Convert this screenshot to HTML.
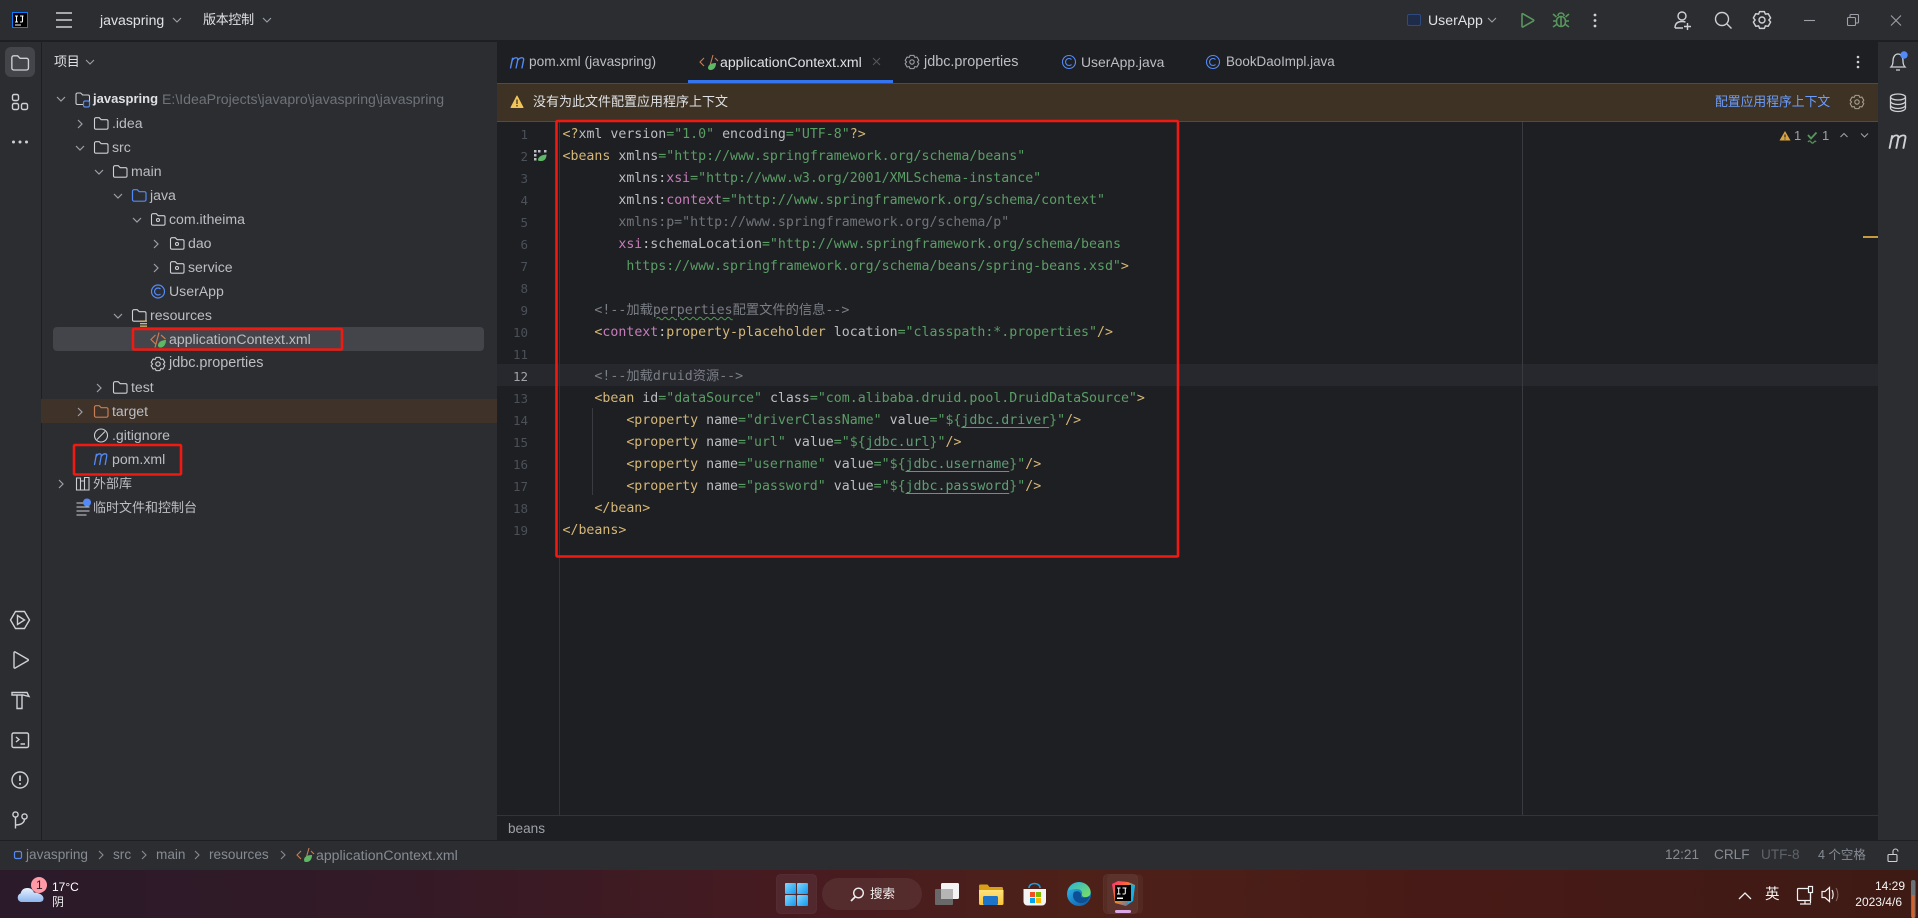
<!DOCTYPE html>
<html lang="zh"><head><meta charset="utf-8"><title>javaspring</title>
<style>
html,body{margin:0;padding:0;background:#1e1f22}
#r{position:relative;width:1918px;height:918px;overflow:hidden;font-family:"Liberation Sans","Noto Sans CJK SC",sans-serif;font-size:14.1px;color:#bcbec4}
#r>svg{position:absolute;left:0;top:0}
.t{position:absolute;line-height:20px;white-space:pre;height:20px}
.c{font-size:13px;letter-spacing:-.3px}
.b{position:absolute}
.l{position:absolute;left:562.5px;height:22px;margin-top:2px;font:13.25px/22px "DejaVu Sans Mono","Noto Sans CJK SC",monospace;white-space:pre;color:#bcbec4}
.n{position:absolute;width:40px;left:488px;margin-top:1.5px;text-align:right;font:12.5px/22px "DejaVu Sans Mono",monospace;color:#4b5059}
.y{color:#d5b778}.g{color:#5a9e66}.p{color:#c77dbb}.d{color:#7a7e85}.u{color:#6f737a}
.k{text-decoration:underline;text-decoration-color:#6f8f78;text-underline-offset:3px;color:#5f9e76}
.w{text-decoration:underline wavy #4f9a55 1px;text-underline-offset:2px}
.s{color:#878b93;font-size:13.6px}
</style></head><body><div id="r">
<svg width="1918" height="918" viewBox="0 0 1918 918" xmlns="http://www.w3.org/2000/svg" fill="none">
<defs>
<linearGradient id="tb" x1="0" x2="1" y1="0" y2="0"><stop offset="0" stop-color="#2a1a2a"/><stop offset=".2" stop-color="#331a26"/><stop offset=".42" stop-color="#471b20"/><stop offset=".56" stop-color="#4d2118"/><stop offset=".75" stop-color="#481a17"/><stop offset="1" stop-color="#3e1a14"/></linearGradient>
<linearGradient id="win" x1="0" x2="1" y1="0" y2="1"><stop offset="0" stop-color="#86d7fd"/><stop offset="1" stop-color="#0f97ef"/></linearGradient>
<linearGradient id="fol" x1="0" x2="0" y1="0" y2="1"><stop offset="0" stop-color="#ffe27a"/><stop offset="1" stop-color="#f8c43c"/></linearGradient>
<linearGradient id="edg" x1="0" x2="1" y1="0" y2="1"><stop offset="0" stop-color="#35c1f1"/><stop offset=".55" stop-color="#1b7fc4"/><stop offset="1" stop-color="#0c59a4"/></linearGradient>
<linearGradient id="edg2" x1="0" x2="1" y1="0" y2="1"><stop offset="0" stop-color="#2bb5d8"/><stop offset="1" stop-color="#7ee05a"/></linearGradient>
<linearGradient id="ij" x1="0" x2="1" y1="0" y2="1"><stop offset="0" stop-color="#ff2d7a"/><stop offset=".5" stop-color="#fc801d"/><stop offset="1" stop-color="#087cfa"/></linearGradient>
<linearGradient id="cl" x1="0" x2="0" y1="0" y2="1"><stop offset="0" stop-color="#e8f1ff"/><stop offset="1" stop-color="#8db6ee"/></linearGradient>
<path id="fo" d="M1.5 3A1.5 1.5 0 0 1 3 1.5h3.2l2 2h5.3A1.5 1.5 0 0 1 15 5v6.5a1.5 1.5 0 0 1-1.5 1.5H3A1.5 1.5 0 0 1 1.5 11.500z"/>
<path id="cd" d="M0 0l4 4 4-4"/>
<path id="cr" d="M0 0l4 4-4 4"/>
<path id="ge" stroke-linejoin="round" d="M-2-7H2L2.800-4.900 5.200-5.200 7.200-1.700 5.700 0 7.200 1.700 5.200 5.200 2.800 4.900 2 7H-2L-2.800 4.900-5.200 5.200-7.200 1.700-5.700 0-7.200-1.700-5.200-5.200-2.800-4.900Z"/>
<path id="mm" stroke-linecap="round" d="M.5 11 2.400.8M2 3.200C3 1.300 4.500.3 5.700.3 7 .3 7.500 1.200 7.200 2.800L5.700 11M7.400 2.600C8.400 1.100 9.900.3 11.200.3 12.500.3 13 1.200 12.700 2.800L11.200 11"/>
</defs>
<!-- base panels -->
<rect width="1918" height="918" fill="#1e1f22"/>
<rect width="1918" height="40" fill="#2b2d30"/>
<rect y="40" width="1918" height="2" fill="#1e1f22"/>
<rect y="42" width="41" height="798" fill="#2b2d30"/>
<rect x="41" y="42" width="1" height="798" fill="#1e1f22"/>
<rect x="42" y="42" width="455" height="798" fill="#2b2d30"/>
<rect x="1878" y="42" width="40" height="798" fill="#2b2d30"/>
<rect y="840" width="1918" height="30" fill="#2b2d30"/>
<rect y="840" width="1918" height="1" fill="#1e1f22"/>
<rect y="870" width="1918" height="48" fill="url(#tb)"/>
<!-- tree rows -->
<rect x="53" y="327" width="431" height="24" rx="4" fill="#43454a"/>
<rect x="41" y="399" width="456" height="24" fill="#3e3229"/>
<!-- tab underline -->
<rect x="688" y="80" width="205" height="3" fill="#3574f0"/>
<!-- banner -->
<rect x="497" y="83" width="1381" height="38" fill="#3d3223"/>
<rect x="497" y="83" width="1381" height="1" fill="#5a4a30"/>
<rect x="497" y="121" width="1381" height="1" fill="#5a4a30"/>
<!-- editor -->
<rect x="497" y="364" width="1381" height="22" fill="#26282e"/>
<rect x="559" y="122" width="1" height="693" fill="#313438"/>
<rect x="1522" y="122" width="1" height="693" fill="#393b40"/>
<rect x="592" y="408" width="1" height="87" fill="#393b40"/>
<rect x="497" y="815" width="1381" height="1" fill="#313438"/>
<rect x="1863" y="236" width="15" height="2" fill="#c79a3e"/>
<!-- title bar icons -->
<rect x="12.500" y="12.500" width="15" height="15" fill="#000" stroke="#087cfa"/>
<path d="M15 16h3M16.500 16v6M15 22h3M20 16h3.500M22.500 16v5q0 1-1 1H20M15 25h6" stroke="#fff" stroke-width="1.100"/>
<path d="M56 13h16M56 20h16M56 27h16" stroke="#ced0d6" stroke-width="1.400"/>
<g stroke="#9da0a8" stroke-width="1.100"><use href="#cd" x="173" y="18"/><use href="#cd" x="263" y="18"/><use href="#cd" x="1488" y="18"/></g>
<rect x="1407.500" y="14.500" width="13" height="11" rx="1.500" fill="#1e2c4a" stroke="#2f4a80"/>
<path d="M1522 14.500v12.500a.6.6 0 0 0 1 .4l10.500-6a.6.6 0 0 0 0-1l-10.500-6a.6.6 0 0 0-1 .1z" stroke="#57965c" stroke-width="1.600" transform="translate(0 -.5)"/>
<g stroke="#57965c" stroke-width="1.600"><rect x="1556.500" y="16.500" width="9" height="10" rx="4.500"/><path d="M1558 16c0-4 6-4 6 0M1553 14l3.500 3M1569 14l-3.500 3M1553 21h3.500M1565.500 21h3.500M1553 27l3.500-2.500M1569 27l-3.500-2.500M1561 17v9"/></g>
<g fill="#ced0d6"><circle cx="1595" cy="15" r="1.400"/><circle cx="1595" cy="20.500" r="1.400"/><circle cx="1595" cy="26" r="1.400"/></g>
<g stroke="#ced0d6" stroke-width="1.400"><circle cx="1682" cy="16" r="4"/><path d="M1675 28c0-5 3-6.500 7-6.500 1.500 0 2.500.2 3.500.6M1675 28h8M1684 26.500h7M1687.500 23v7"/>
<circle cx="1722" cy="19" r="6.500"/><path d="M1727 24l4.500 4.500"/>
<use href="#ge" transform="translate(1762 20) scale(1.200)" stroke-width="1.200"/><circle cx="1762" cy="20" r="3"/></g>
<g stroke="#9da0a8" stroke-width="1.100"><path d="M1804 20.500h11"/><rect x="1847.500" y="17.500" width="8" height="8" rx="1"/><path d="M1850 17v-1.500a1 1 0 0 1 1-1h6.500a1 1 0 0 1 1 1v6.500a1 1 0 0 1-1 1H1856"/><path d="M1891 15.500l10 10M1901 15.500l-10 10"/></g>
<!-- left stripe -->
<rect x="5" y="47" width="30" height="30" rx="6" fill="#43454a"/>
<g stroke="#ced0d6" stroke-width="1.400">
<use href="#fo" transform="translate(10 54) scale(1.230)" stroke-width="1.100"/>
<rect x="12.500" y="94.500" width="6" height="6" rx="1.500"/><rect x="12.500" y="103.500" width="6" height="6" rx="1.500"/><rect x="21.500" y="103.500" width="6" height="6" rx="1.500"/>
</g>
<g fill="#ced0d6"><circle cx="13.500" cy="142" r="1.500"/><circle cx="20" cy="142" r="1.500"/><circle cx="26.500" cy="142" r="1.500"/></g>
<g stroke="#ced0d6" stroke-width="1.400">
<path d="M15.500 611.500h9l5 8.500-5 8.500h-9l-5-8.500z"/><path d="M17.500 615.500v9l7-4.500z"/>
<path d="M14 652.500v15a.7.7 0 0 0 1 .6l13-7.500a.7.7 0 0 0 0-1.200l-13-7.500a.7.7 0 0 0-1 .6z"/>
<path d="M12 692.500h15l2 4-6-1.500H12zM17 695.500v13h5v-13"/>
<rect x="12" y="733" width="16.500" height="14.500" rx="1.500"/><path d="M16 737l3 2.500-3 2.500M20.500 744h4.500"/>
<circle cx="20" cy="780" r="8"/><path d="M20 775.500v5.500M20 783v1.800" stroke-width="1.700"/>
<circle cx="15.500" cy="814.500" r="2.600"/><circle cx="24.500" cy="816.500" r="2.600"/><path d="M15.500 817.500v11M15.500 825c5 0 9-2 9-6"/>
</g>
<!-- tree chevrons -->
<g stroke="#9da0a8" stroke-width="1.200">
<use href="#cd" x="57" y="97"/><use href="#cr" x="78" y="120"/><use href="#cd" x="76" y="146"/><use href="#cd" x="95" y="170"/><use href="#cd" x="114" y="194"/><use href="#cd" x="133" y="218"/><use href="#cr" x="154" y="240"/><use href="#cr" x="154" y="264"/><use href="#cd" x="114" y="314"/><use href="#cr" x="97" y="384"/><use href="#cr" x="78" y="408"/><use href="#cr" x="59" y="480"/>
</g>
<!-- tree icons -->
<g transform="translate(0 -.5)">
<g stroke="#ced0d6" stroke-width="1.100">
<use href="#fo" x="74.500" y="92"/>
<use href="#fo" x="93" y="116.700"/><use href="#fo" x="93" y="140.700"/><use href="#fo" x="112" y="164.700"/>
<use href="#fo" x="150" y="212.700"/><circle cx="158" cy="220.500" r="1.500"/>
<use href="#fo" x="169" y="236.700"/><circle cx="177" cy="244.500" r="1.500"/>
<use href="#fo" x="169" y="260.700"/><circle cx="177" cy="268.500" r="1.500"/>
<use href="#fo" x="131" y="308.700"/><use href="#fo" x="112" y="380.700"/>
<circle cx="158" cy="364.500" r="2.200"/><use href="#ge" transform="translate(158 364.500) scale(.95)"/>
<circle cx="101" cy="436" r="6.500"/><path d="M97 440l8-8"/>
<path d="M76.500 478.500h4v12h-4zM80.500 481.500h4v9h-4zM84.500 478h4.500v12.500h-4.500z"/>
</g>
<rect x="83.500" y="101.500" width="6" height="6" rx="1.500" fill="#2b2d30" stroke="#548af7" stroke-width="1.200"/>
<use href="#fo" x="131" y="188.700" stroke="#548af7" stroke-width="1.200"/>
<use href="#fo" x="93" y="404.700" stroke="#c77d55" stroke-width="1.200"/>
<circle cx="158" cy="292" r="6.500" stroke="#548af7" stroke-width="1.200"/><path d="M160.500 289.500a3.500 3.500 0 1 0 0 5" stroke="#548af7" stroke-width="1.200"/>
<rect x="140" y="321" width="7" height="1.300" fill="#d5b778"/><rect x="140" y="323.500" width="7" height="1.300" fill="#d5b778"/><rect x="140" y="326" width="7" height="1.300" fill="#d5b778"/>
<g stroke="#c77d55" stroke-width="1.200"><path d="M155.500 335.500l-4.500 4.500 4.500 4.500M159 333l-4 15M161 335.500l4.500 4"/></g><path d="M158 346c0-3 3-5.500 8-5.500 0 4-2 7.500-5.500 7.500-1.500 0-2.500-.8-2.500-2z" fill="#5fb865"/>
<use href="#mm" transform="translate(94 454)" stroke="#548af7" stroke-width="1.300"/>
<path d="M76.500 503.500h10M76.500 507.500h13M76.500 511.500h13M76.500 515.500h10" stroke="#ced0d6" stroke-width="1.100"/><circle cx="87" cy="503" r="4" fill="#548af7"/>
</g>
<!-- project header chevron -->
<use href="#cd" x="86" y="60" stroke="#9da0a8" stroke-width="1.100"/>
<!-- tabs icons -->
<use href="#mm" transform="translate(510 57.500) scale(1.070 .95)" stroke="#548af7" stroke-width="1.300"/>
<g stroke="#c77d55" stroke-width="1.100"><path d="M704 58l-4 4 4 4M713 55l-4 14M715 58l3 3"/></g><path d="M708 68c0-3 3-5 8-5 0 4-2 7-5.500 7-1.500 0-2.500-1-2.500-2z" fill="#5fb865"/>
<path d="M873 58l7 7M880 58l-7 7" stroke="#54575d" stroke-width="1.100"/>
<g stroke="#9da0a8" stroke-width="1.100"><circle cx="912" cy="62" r="2.200"/><use href="#ge" transform="translate(912 62) scale(.95)"/></g>
<g stroke="#548af7" stroke-width="1.100"><circle cx="1069" cy="62" r="6.500"/><path d="M1071.500 59.500a3.500 3.500 0 1 0 0 5"/><circle cx="1213" cy="62" r="6.500"/><path d="M1215.500 59.500a3.500 3.500 0 1 0 0 5"/></g>
<g fill="#ced0d6"><circle cx="1858" cy="57" r="1.300"/><circle cx="1858" cy="62" r="1.300"/><circle cx="1858" cy="67" r="1.300"/></g>
<!-- banner icons -->
<path d="M517 96l6 11.500h-12z" fill="#f2c55c" stroke="#f2c55c" stroke-linejoin="round"/><path d="M517 99.500v4.500M517 105v1.500" stroke="#3d3223" stroke-width="1.300"/>
<g stroke="#a89f92" stroke-width="1.100"><circle cx="1857" cy="102" r="2.200"/><use href="#ge" transform="translate(1857 102) scale(.95)"/></g>
<!-- gutter icon -->
<g fill="#bcbec4"><rect x="534" y="150" width="2.500" height="2.500"/><rect x="538" y="150" width="2.500" height="2.500"/><rect x="544" y="150" width="2.500" height="2.500"/><rect x="534" y="154" width="2.500" height="2.500"/><rect x="534" y="158" width="2.500" height="2.500"/></g><path d="M538 160c0-3 3-5 8.500-5.500 0 4-2 6.500-5 6.500-1.500 0-3.500 0-3.500-1z" fill="#5fb865"/>
<!-- inspection widget -->
<path d="M1785 131l5.500 9.500h-11z" fill="#d9a343"/><path d="M1785 134.500v3M1785 138.500v1" stroke="#1e1f22" stroke-width="1.100"/>
<path d="M1808 135l3 3.500 5.500-6" stroke="#57965c" stroke-width="1.800"/><path d="M1808 142c1-1.500 2-1.500 3 0s2 1.500 3 0 1.500-1 2 0" stroke="#57965c" stroke-width="1.200"/>
<g stroke="#9da0a8" stroke-width="1.100"><path d="M1840.500 137l3.500-3.500 3.500 3.500M1861 133.500l3.500 3.500 3.500-3.500"/></g>
<!-- right stripe -->
<g stroke="#ced0d6" stroke-width="1.300"><path d="M1891 67h14c-2-2-2-4-2-6 0-4-2-7-5-7s-5 3-5 7c0 2 0 4-2 6zM1896 70h4"/>
<ellipse cx="1898" cy="97" rx="7.500" ry="3"/><path d="M1890.500 97v11c0 2 3.500 3.500 7.500 3.500s7.500-1.500 7.500-3.500V97M1890.500 101c0 2 3.500 3.500 7.500 3.500s7.500-1.500 7.500-3.500M1890.500 105c0 2 3.500 3.500 7.500 3.500s7.500-1.500 7.500-3.500"/></g>
<circle cx="1904" cy="55" r="3.700" fill="#548af7"/>
<use href="#mm" transform="translate(1889 135) scale(1.290 1.180)" stroke="#ced0d6" stroke-width="1.500"/>
<!-- breadcrumbs -->
<rect x="14.500" y="851.500" width="7" height="7" rx="1.500" stroke="#548af7" stroke-width="1.200"/>
<g stroke="#878b93" stroke-width="1.100"><use href="#cr" x="99" y="851"/><use href="#cr" x="142" y="851"/><use href="#cr" x="195" y="851"/><use href="#cr" x="281" y="851"/></g>
<g stroke="#c77d55" stroke-width="1.100"><path d="M301 851l-4 4 4 4M309 848l-4 14M311 851l3 3"/></g><path d="M304 860c0-3 3-5 8-5 0 4-2 7-5.500 7-1.500 0-2.500-1-2.500-2z" fill="#5fb865"/>
<g stroke="#ced0d6" stroke-width="1.100"><rect x="1888" y="854.500" width="9" height="7" rx="1"/><path d="M1893 854.500v-3a2.500 2.500 0 0 1 5 0"/></g>
<!-- taskbar -->
<rect x="776.500" y="874.500" width="40" height="39" rx="4" fill="#fff" fill-opacity=".06" stroke="#fff" stroke-opacity=".05"/>
<rect x="785" y="883" width="11" height="11" rx="1" fill="url(#win)"/><rect x="797" y="883" width="11" height="11" rx="1" fill="url(#win)"/><rect x="785" y="895" width="11" height="11" rx="1" fill="url(#win)"/><rect x="797" y="895" width="11" height="11" rx="1" fill="url(#win)"/>
<rect x="822" y="878" width="100" height="32" rx="16" fill="#fff" fill-opacity=".07"/>
<circle cx="858.500" cy="893" r="4.800" stroke="#f0f0f0" stroke-width="1.400"/><path d="M855 897l-4 4" stroke="#f0f0f0" stroke-width="1.700"/>
<rect x="935" y="889" width="18" height="16" rx="1" fill="#696969"/><rect x="941" y="883" width="18" height="16" rx="1.500" fill="#f4f4f4"/><rect x="941" y="889" width="12" height="10" fill="#b5b5b5"/>
<path d="M979 886a1.500 1.500 0 0 1 1.500-1.500h7l2 2.500h12a1.500 1.500 0 0 1 1.500 1.500v15a1 1 0 0 1-1 1h-21.500a1 1 0 0 1-1-1z" fill="#d99f16"/><path d="M979 890h24.500v13.500a1.500 1.500 0 0 1-1.500 1.500h-21.500a1.500 1.500 0 0 1-1.500-1.500z" fill="url(#fol)"/><rect x="983" y="896" width="15" height="9" rx="1.500" fill="#1e74c9"/>
<path d="M1029 888c0-6 11-6 11 0" stroke="#1a9de0" stroke-width="1.600"/><path d="M1023.500 889h22.500v12.500a4 4 0 0 1-4 4H1027.500a4 4 0 0 1-4-4z" fill="#f4f4f4"/><rect x="1030" y="892" width="5" height="5" fill="#f25022"/><rect x="1036" y="892" width="5" height="5" fill="#7fba00"/><rect x="1030" y="898" width="5" height="5" fill="#00a4ef"/><rect x="1036" y="898" width="5" height="5" fill="#ffb900"/>
<circle cx="1079" cy="894" r="12" fill="url(#edg)"/><path d="M1068 890c3-9 15-10 20-4 3 3 3 7 2 9-2 3-9 3-8-1 .5-2-1-5-5-5-4 0-7 1-9 1z" fill="url(#edg2)"/><path d="M1077 902c-4-2-5-7-3-10 4-2 8 0 7 5 2 1 6 1 9-1-2 6-8 9-13 6z" fill="#0d4f94"/>
<rect x="1107" y="874.500" width="36" height="39" rx="4" fill="#fff" fill-opacity=".04"/>
<rect x="1103.500" y="874.500" width="34" height="39" rx="4" fill="#fff" fill-opacity=".05" stroke="#fff" stroke-opacity=".05"/>
<path d="M1112 884l6-3 10 1 7 3-2 16-7 5-11-3z" fill="url(#ij)"/><path d="M1129 884l6 1-2 16-5 3z" fill="#12b2e8"/>
<rect x="1115" y="885" width="16" height="16" fill="#000"/>
<path d="M1117 888h3.500M1118.700 888v6M1117 894h3.500M1122.500 888h4M1125.300 888v5q0 1-1 1h-1.800" stroke="#fff"/><rect x="1117" y="897.500" width="6" height="1.500" fill="#fff"/>
<rect x="1115" y="910" width="16" height="3" rx="1.500" fill="#dba8e6"/>
<path d="M21 902a4.500 4.500 0 0 1-.5-8.500c1-3.500 3-5.500 7-5.500 3.500 0 5.500 2 6.500 4.500 5 0 9.500 2.500 9.500 6 0 2.500-2 3.500-4 3.500z" fill="url(#cl)"/>
<circle cx="39" cy="885" r="8" fill="#ff9aa6"/>
<path d="M1739 899l6-6 6 6" stroke="#f2f2f2" stroke-width="1.300"/>
<g stroke="#f2f2f2" stroke-width="1.200"><rect x="1797.500" y="888.500" width="13" height="12" rx="1"/><path d="M1800 904h11M1805 901v3"/><rect x="1808.500" y="886.500" width="4" height="6" fill="#3e1a14"/><path d="M1810.500 893v10"/>
<path d="M1822 891.500h3l4.500-4v14l-4.500-4h-3z"/><path d="M1832 890c1.500 2.500 1.500 6.500 0 9"/></g>
<path d="M1836 888c2.500 4 2.500 9 0 13" stroke="#8a6a60" stroke-width="1"/>
<rect x="1911" y="880" width="4.500" height="38" rx="2" fill="#6a7276"/><rect x="1912" y="895" width="2.500" height="23" fill="#d4622a"/>
<!-- red annotation boxes -->
<g stroke="#f01a12" stroke-width="2.600" fill="none"><rect x="133" y="329" width="209" height="20.500" rx="1"/><rect x="74" y="445" width="107" height="29.500" rx="1"/><rect x="556.500" y="121" width="621.500" height="435.500" rx="1"/></g>
</svg>

<span class="t" style="left:100px;top:10px;color:#dfe1e5">javaspring</span>
<span class="t c" style="left:203px;top:10px;color:#dfe1e5">版本控制</span>
<span class="t" style="left:1428px;top:10px;color:#dfe1e5">UserApp</span>

<span class="t c" style="left:54px;top:52px;color:#dfe1e5">项目</span>
<span class="t" style="left:93px;top:89px;font-weight:700;color:#dfe1e5;font-size:13px">javaspring</span>
<span class="t" style="left:162px;top:89px;color:#6f737a">E:\IdeaProjects\javapro\javaspring\javaspring</span>
<span class="t" style="left:112px;top:113px">.idea</span>
<span class="t" style="left:112px;top:137px">src</span>
<span class="t" style="left:131px;top:161px">main</span>
<span class="t" style="left:150px;top:185px">java</span>
<span class="t" style="left:169px;top:209px">com.itheima</span>
<span class="t" style="left:188px;top:233px">dao</span>
<span class="t" style="left:188px;top:257px">service</span>
<span class="t" style="left:169px;top:281px">UserApp</span>
<span class="t" style="left:150px;top:305px">resources</span>
<span class="t" style="left:169px;top:329px">applicationContext.xml</span>
<span class="t" style="left:169px;top:353px;font-size:14.400px">jdbc.properties</span>
<span class="t" style="left:131px;top:377px">test</span>
<span class="t" style="left:112px;top:401px">target</span>
<span class="t" style="left:112px;top:425px">.gitignore</span>
<span class="t" style="left:112px;top:449px">pom.xml</span>
<span class="t" style="left:93px;top:474px;font-size:13px">外部库</span>
<span class="t" style="left:93px;top:498px;font-size:13px">临时文件和控制台</span>

<span class="t" style="left:529px;top:52px;font-size:13.700px">pom.xml (javaspring)</span>
<span class="t" style="left:720px;top:52px;color:#dfe1e5">applicationContext.xml</span>
<span class="t" style="left:924px;top:52px;font-size:14.400px">jdbc.properties</span>
<span class="t" style="left:1081px;top:52px;font-size:13.900px">UserApp.java</span>
<span class="t" style="left:1226px;top:52px;font-size:13.400px">BookDaoImpl.java</span>

<span class="t" style="left:533px;top:92px;font-size:13px;color:#dfe1e5">没有为此文件配置应用程序上下文</span>
<span class="t" style="left:1715px;top:92px;font-size:12.800px;color:#6c9eff">配置应用程序上下文</span>
<span class="t" style="left:1794px;top:126px;color:#9da0a8;font-size:13px">1</span>
<span class="t" style="left:1822px;top:126px;color:#9da0a8;font-size:13px">1</span>

<span class="n" style="top:122px">1</span><span class="n" style="top:144px">2</span><span class="n" style="top:166px">3</span><span class="n" style="top:188px">4</span><span class="n" style="top:210px">5</span><span class="n" style="top:232px">6</span><span class="n" style="top:254px">7</span><span class="n" style="top:276px">8</span><span class="n" style="top:298px">9</span><span class="n" style="top:320px">10</span><span class="n" style="top:342px">11</span><span class="n" style="top:364px;color:#a1a3ab">12</span><span class="n" style="top:386px">13</span><span class="n" style="top:408px">14</span><span class="n" style="top:430px">15</span><span class="n" style="top:452px">16</span><span class="n" style="top:474px">17</span><span class="n" style="top:496px">18</span><span class="n" style="top:518px">19</span>

<div class="l" style="top:122px"><span class="y">&lt;?</span>xml version<span class="g">="1.0"</span> encoding<span class="g">="UTF-8"</span><span class="y">?&gt;</span></div>
<div class="l" style="top:144px"><span class="y">&lt;beans</span> xmlns<span class="g">="http://www.springframework.org/schema/beans"</span></div>
<div class="l" style="top:166px">       xmlns:<span class="p">xsi</span><span class="g">="http://www.w3.org/2001/XMLSchema-instance"</span></div>
<div class="l" style="top:188px">       xmlns:<span class="p">context</span><span class="g">="http://www.springframework.org/schema/context"</span></div>
<div class="l u" style="top:210px;color:#6f737a">       xmlns:p="http://www.springframework.org/schema/p"</div>
<div class="l" style="top:232px">       <span class="p">xsi</span>:schemaLocation<span class="g">="http://www.springframework.org/schema/beans</span></div>
<div class="l" style="top:254px">        <span class="g">https://www.springframework.org/schema/beans/spring-beans.xsd"</span><span class="y">&gt;</span></div>
<div class="l d" style="top:298px;color:#7a7e85">    &lt;!--加载<span class="w">perperties</span>配置文件的信息--&gt;</div>
<div class="l" style="top:320px">    <span class="y">&lt;</span><span class="p">context</span>:<span class="y">property-placeholder</span> location<span class="g">="classpath:*.properties"</span><span class="y">/&gt;</span></div>
<div class="l" style="top:364px;color:#7a7e85">    &lt;!--加载druid资源--&gt;</div>
<div class="l" style="top:386px">    <span class="y">&lt;bean</span> id<span class="g">="dataSource"</span> class<span class="g">="com.alibaba.druid.pool.DruidDataSource"</span><span class="y">&gt;</span></div>
<div class="l" style="top:408px">        <span class="y">&lt;property</span> name<span class="g">="driverClassName"</span> value<span class="g">="${<span class="k">jdbc.driver</span>}"</span><span class="y">/&gt;</span></div>
<div class="l" style="top:430px">        <span class="y">&lt;property</span> name<span class="g">="url"</span> value<span class="g">="${<span class="k">jdbc.url</span>}"</span><span class="y">/&gt;</span></div>
<div class="l" style="top:452px">        <span class="y">&lt;property</span> name<span class="g">="username"</span> value<span class="g">="${<span class="k">jdbc.username</span>}"</span><span class="y">/&gt;</span></div>
<div class="l" style="top:474px">        <span class="y">&lt;property</span> name<span class="g">="password"</span> value<span class="g">="${<span class="k">jdbc.password</span>}"</span><span class="y">/&gt;</span></div>
<div class="l" style="top:496px">    <span class="y">&lt;/bean&gt;</span></div>
<div class="l" style="top:518px"><span class="y">&lt;/beans&gt;</span></div>

<span class="t" style="left:508px;top:819px;color:#9da0a8;font-size:13.600px">beans</span>
<span class="t s" style="left:26px;top:845px">javaspring</span>
<span class="t s" style="left:113px;top:845px">src</span>
<span class="t s" style="left:156px;top:845px">main</span>
<span class="t s" style="left:209px;top:845px">resources</span>
<span class="t s" style="left:316px;top:845px;font-size:14.100px">applicationContext.xml</span>
<span class="t s" style="left:1665px;top:845px">12:21</span>
<span class="t s" style="left:1714px;top:845px">CRLF</span>
<span class="t s" style="left:1761px;top:845px;color:#5f636b">UTF-8</span>
<span class="t s" style="left:1818px;top:845px;font-size:12.500px">4 个空格</span>

<span class="t" style="left:36px;top:875px;width:6px;font-size:12px;color:#222">1</span>
<span class="t" style="left:52px;top:877px;font-size:12px;color:#fff">17°C</span>
<span class="t" style="left:52px;top:892px;font-size:12px;color:#eee">阴</span>
<span class="t" style="left:870px;top:884px;font-size:12.500px;color:#f0f0f0">搜索</span>
<span class="t" style="left:1765px;top:885px;font-size:14.500px;color:#f5f5f5">英</span>
<span class="t" style="left:1875px;top:876px;width:27px;text-align:right;font-size:12px;color:#f5f5f5">14:29</span>
<span class="t" style="left:1852px;top:892px;width:50px;text-align:right;font-size:12px;color:#f5f5f5">2023/4/6</span>
</div></body></html>
